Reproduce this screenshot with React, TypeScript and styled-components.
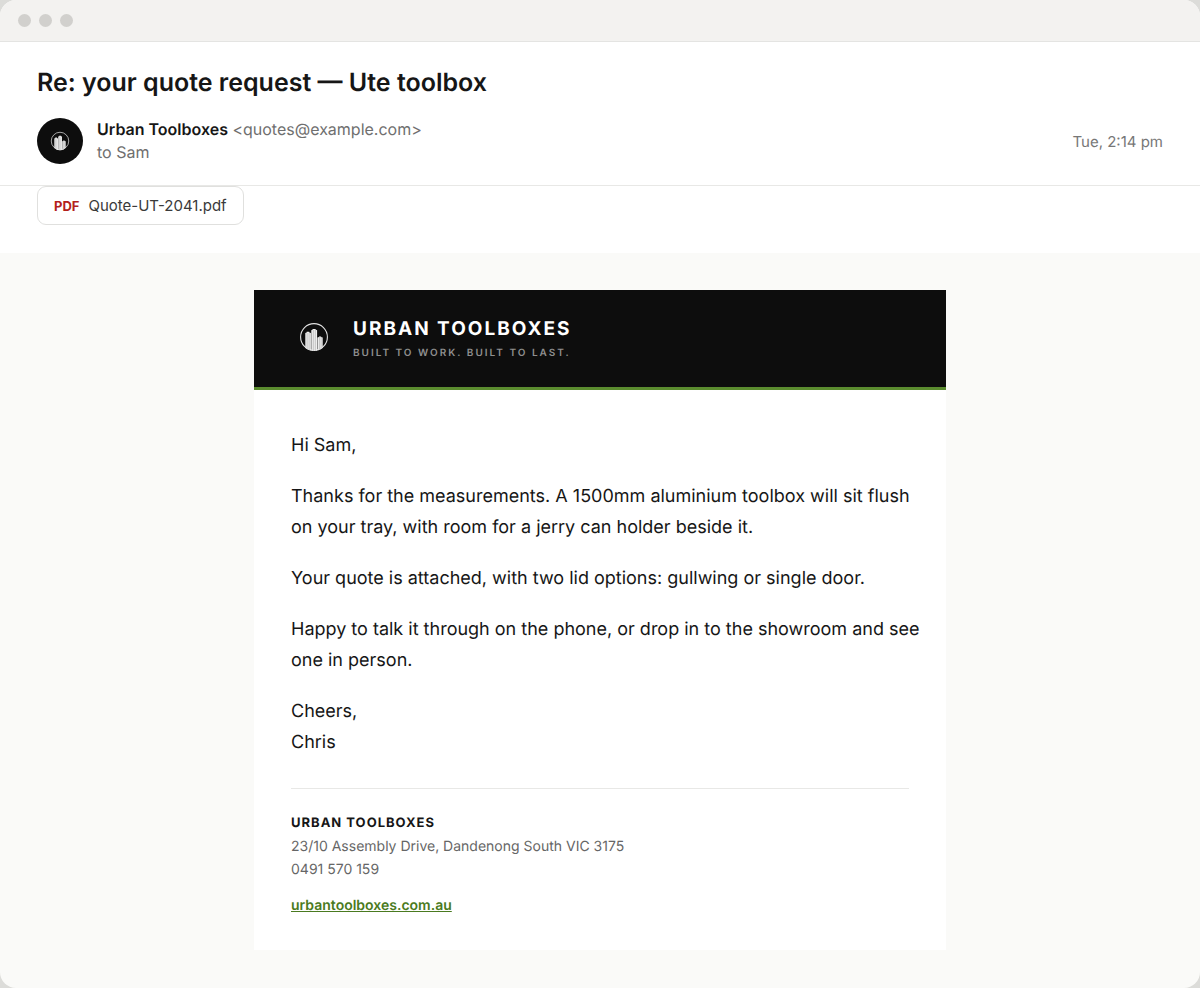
import React from "react";
import styled, { createGlobalStyle } from "styled-components";

const GlobalStyle = createGlobalStyle`
  * { box-sizing: border-box; }
  body {
    margin: 0;
    background: #dcdcd9;
    font-family: Inter, "Liberation Sans", sans-serif;
    text-rendering: geometricPrecision;
    color: #161616;
  }
  h1, h2, p { margin: 0; }
`;

const Window = styled.div`
  min-height: 100vh;
  border-radius: 16px;
  overflow: hidden;
  background: #fafaf8;
`;

const TitleBar = styled.div`
  display: flex;
  align-items: center;
  gap: 8px;
  height: 42px;
  padding: 0 18px 1px;
  background: #f3f2f0;
  border-bottom: 1px solid #e4e4e2;
`;

const Dot = styled.span`
  width: 13px;
  height: 13px;
  border-radius: 50%;
  background: #d1d0cd;
`;

const MessageHeader = styled.header`
  padding: 25px 37px 21px;
  background: #fff;
  border-bottom: 1px solid #e8e8e6;
`;

const Subject = styled.h1`
  font-size: 25px;
  line-height: 32px;
  font-weight: 600;
`;

const SenderRow = styled.div`
  display: flex;
  align-items: center;
  gap: 14px;
  margin-top: 19px;
`;

const Avatar = styled.span`
  display: flex;
  align-items: center;
  justify-content: center;
  width: 46px;
  height: 46px;
  border-radius: 50%;
  background: #0d0d0d;
`;

const Sender = styled.div`
  flex: 1;
  font-size: 16px;
  line-height: 23px;
  color: #6f6f6f;
`;

const SenderName = styled.strong`
  font-weight: 600;
  color: #161616;
`;

const Time = styled.time`
  font-size: 15px;
  line-height: 23px;
  color: #777;
`;

const Attachments = styled.div`
  display: flex;
  padding: 0 37px 28px;
  background: #fff;
`;

const Attachment = styled.button`
  display: flex;
  align-items: center;
  gap: 9px;
  height: 39px;
  padding: 0 16px;
  border: 1px solid #e0e0de;
  border-radius: 9px;
  background: #fff;
  font: inherit;
  font-size: 15px;
  color: #3a3a3a;
`;

const FileType = styled.span`
  font-size: 13px;
  font-weight: 700;
  color: #b3201b;
`;

const Canvas = styled.main`
  padding: 37px 24px;
`;

const Card = styled.article`
  max-width: 692px;
  margin: 0 auto;
  background: #fff;
`;

const Banner = styled.div`
  display: flex;
  align-items: flex-start;
  gap: 16px;
  padding: 24px 37px 25px;
  background: #0d0d0d;
  border-bottom: 3px solid #5b8c2f;
`;

const BrandName = styled.h2`
  font-size: 19px;
  line-height: 30px;
  font-weight: 700;
  letter-spacing: 2px;
  color: #fff;
`;

const Tagline = styled.p`
  font-size: 10px;
  line-height: 18px;
  font-weight: 600;
  letter-spacing: 2px;
  color: #8f8f8f;
`;

const Letter = styled.div`
  padding: 40px 21px 33px 37px;
`;

const Paragraph = styled.p`
  margin-bottom: 20px;
  font-size: 18px;
  line-height: 31px;
`;

const Signature = styled.footer`
  margin: 30px 16px 0 0;
  padding-top: 23px;
  border-top: 1px solid #e8e8e6;
  font-size: 14px;
  line-height: 23px;
  color: #666;
`;

const SignatureName = styled.p`
  font-size: 13px;
  font-weight: 700;
  letter-spacing: 1px;
  color: #161616;
`;

const SiteLink = styled.a`
  display: inline-block;
  margin-top: 13px;
  font-weight: 600;
  color: #4a7a20;
`;

function Logo({ size, id }: { size: number; id: string }) {
  return (
    <svg width={size} height={size} viewBox="0 0 46 46" aria-hidden="true">
      <clipPath id={id}>
        <circle cx="23" cy="23" r="14" />
      </clipPath>
      <circle cx="23" cy="23" r="13.4" fill="none" stroke="#e2e2e2" strokeWidth="1.1" />
      <g clipPath={`url(#${id})`}>
        <path
          d="M14.3 40V19l1.4-.6v-.6h2.6v.6l1.6.6v21zM20.3 40V16.2l1.4-.6V15h2.8v.6l1.6.6V40zM26.5 40V23.4l1.5-.5v-.5h2.1v.5l1.6.6V40z"
          fill="#f0f0f0"
        />
        <path
          d="M16.1 19v21M18.1 19v21M22.3 16v24M24.3 16v24M28.4 23v17M30.1 23v17"
          stroke="#8c8c8c"
          strokeWidth="0.45"
          fill="none"
        />
      </g>
    </svg>
  );
}

export default function App() {
  return (
    <>
      <GlobalStyle />
      <Window>
        <TitleBar>
          <Dot />
          <Dot />
          <Dot />
        </TitleBar>
        <MessageHeader>
          <Subject>Re: your quote request — Ute toolbox</Subject>
          <SenderRow>
            <Avatar>
              <Logo size={30} id="avatar-mark" />
            </Avatar>
            <Sender>
              <SenderName>Urban Toolboxes</SenderName> &lt;quotes@example.com&gt;
              <br />
              to Sam
            </Sender>
            <Time>Tue, 2:14 pm</Time>
          </SenderRow>
        </MessageHeader>
        <Attachments>
          <Attachment type="button">
            <FileType>PDF</FileType>
            Quote-UT-2041.pdf
          </Attachment>
        </Attachments>
        <Canvas>
          <Card>
            <Banner>
              <Logo size={46} id="banner-mark" />
              <div>
                <BrandName>URBAN TOOLBOXES</BrandName>
                <Tagline>BUILT TO WORK. BUILT TO LAST.</Tagline>
              </div>
            </Banner>
            <Letter>
              <Paragraph>Hi Sam,</Paragraph>
              <Paragraph>
                Thanks for the measurements. A 1500mm aluminium toolbox will sit flush on your
                tray, with room for a jerry can holder beside it.
              </Paragraph>
              <Paragraph>
                Your quote is attached, with two lid options: gullwing or single door.
              </Paragraph>
              <Paragraph>
                Happy to talk it through on the phone, or drop in to the showroom and see one in
                person.
              </Paragraph>
              <Paragraph>
                Cheers,
                <br />
                Chris
              </Paragraph>
              <Signature>
                <SignatureName>URBAN TOOLBOXES</SignatureName>
                <p>23/10 Assembly Drive, Dandenong South VIC 3175</p>
                <p>0491 570 159</p>
                <SiteLink href="#">urbantoolboxes.com.au</SiteLink>
              </Signature>
            </Letter>
          </Card>
        </Canvas>
      </Window>
    </>
  );
}
